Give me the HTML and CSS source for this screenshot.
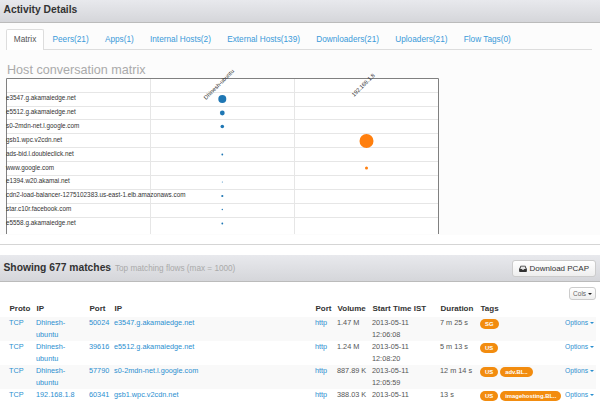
FILE: index.html
```html
<!DOCTYPE html>
<html lang="en">
<head>
    <meta charset="UTF-8">
    <title>Activity Details</title>
    <link rel="stylesheet" href="styles.css">
</head>
<body>
    <div class="bar bar-top">
        <h2>Activity Details</h2>
    </div>
    <div class="panel">
        <ul class="tabs">
            <li class="active">Matrix</li>
            <li>Peers(21)</li>
            <li>Apps(1)</li>
            <li>Internal Hosts(2)</li>
            <li>External Hosts(139)</li>
            <li>Downloaders(21)</li>
            <li>Uploaders(21)</li>
            <li>Flow Tags(0)</li>
        </ul>
        <h3 class="matrix-title">Host conversation matrix</h3>
        <svg class="matrix" width="433" height="156" viewBox="0 0 433 156">
            <rect x="0" y="0" width="433" height="156" fill="#fff"/>
            <g stroke="#e6e6e6" stroke-width="1">
                <path d="M0 14.500H432M0 28.500H432M0 41.500H432M0 55.500H432M0 69.500H432M0 83.500H432M0 97.500H432M0 111.500H432M0 125.500H432M0 139.500H432"/>
                <path d="M144.500 0V156M288.500 0V156"/>
            </g>
            <path d="M0.500 156V0.500H432.500V156" fill="none" stroke="#808080"/>
            <g class="row-labels">
                <text x="0" y="21.500">e3547.g.akamaiedge.net</text>
                <text x="0" y="35.500">e5512.g.akamaiedge.net</text>
                <text x="0" y="49.500">s0-2mdn-net.l.google.com</text>
                <text x="0" y="63.500">gsb1.wpc.v2cdn.net</text>
                <text x="0" y="77.500">ads-bid.l.doubleclick.net</text>
                <text x="0" y="91.500">www.google.com</text>
                <text x="0" y="105">e1394.w20.akamai.net</text>
                <text x="0" y="119">cdn2-load-balancer-1275102383.us-east-1.elb.amazonaws.com</text>
                <text x="0" y="133">star.c10r.facebook.com</text>
                <text x="0" y="147">e5558.g.akamaiedge.net</text>
            </g>
            <g class="col-labels">
                <text transform="translate(200 22) rotate(-45)">Dhinesh-ubuntu</text>
                <text transform="translate(348 19) rotate(-45)">192.168.1.8</text>
            </g>
            <g fill="#1f77b4">
                <circle cx="216.300" cy="21" r="4"/>
                <circle cx="216.300" cy="35" r="2.400"/>
                <circle cx="216.300" cy="48.500" r="1.800"/>
                <circle cx="216.300" cy="76.500" r="0.900"/>
                <circle cx="216.300" cy="104" r="0.500"/>
                <circle cx="216.300" cy="118" r="1.100"/>
                <circle cx="216.300" cy="131.500" r="0.700"/>
                <circle cx="216.300" cy="145.500" r="0.900"/>
            </g>
            <g fill="#ff7f0e">
                <circle cx="360.500" cy="63" r="7"/>
                <circle cx="360.500" cy="90" r="1.500"/>
            </g>
        </svg>
    </div>
    <div class="spacer"></div>
    <div class="bar bar-results">
        <h2>Showing 677 matches <small>Top matching flows (max = 1000)</small></h2>
        <button class="btn btn-download">
            <svg width="8" height="7" viewBox="0 0 10 9"><path d="M2 1h6l2 4v3a1 1 0 0 1-1 1H1a1 1 0 0 1-1-1V5z" fill="#333"/><path d="M2.600 2h4.800l1.200 3H6.500l-.6 1H4.100l-.6-1H1.400z" fill="#e6e6e6"/></svg>
            Download PCAP
        </button>
    </div>
    <div class="results">
        <div class="tools"><button class="btn btn-cols">Cols <span class="caret"></span></button></div>
        <table class="flows">
            <thead>
                <tr>
                    <th class="c-proto">Proto</th>
                    <th class="c-ip">IP</th>
                    <th class="c-port">Port</th>
                    <th class="c-host">IP</th>
                    <th class="c-sport">Port</th>
                    <th class="c-vol">Volume</th>
                    <th class="c-time">Start Time IST</th>
                    <th class="c-dur">Duration</th>
                    <th class="c-tags">Tags</th>
                    <th class="c-opt"></th>
                </tr>
            </thead>
            <tbody>
                <tr>
                    <td><a>TCP</a></td><td><a>Dhinesh-ubuntu</a></td><td><a>50024</a></td><td><a>e3547.g.akamaiedge.net</a></td><td><a>http</a></td>
                    <td class="nowrap">1.47 M</td><td>2013-05-11 12:06:08</td><td class="nowrap">7 m 25 s</td>
                    <td class="nowrap"><span class="tag">SG</span></td><td class="opt"><a>Options <span class="caret"></span></a></td>
                </tr>
                <tr>
                    <td><a>TCP</a></td><td><a>Dhinesh-ubuntu</a></td><td><a>39616</a></td><td><a>e5512.g.akamaiedge.net</a></td><td><a>http</a></td>
                    <td class="nowrap">1.24 M</td><td>2013-05-11 12:08:20</td><td class="nowrap">5 m 13 s</td>
                    <td class="nowrap"><span class="tag">US</span></td><td class="opt"><a>Options <span class="caret"></span></a></td>
                </tr>
                <tr>
                    <td><a>TCP</a></td><td><a>Dhinesh-ubuntu</a></td><td><a>57790</a></td><td><a>s0-2mdn-net.l.google.com</a></td><td><a>http</a></td>
                    <td class="nowrap">887.89 K</td><td>2013-05-11 12:05:59</td><td class="nowrap">12 m 14 s</td>
                    <td class="nowrap"><span class="tag">US</span> <span class="tag">adv.BL..</span></td><td class="opt"><a>Options <span class="caret"></span></a></td>
                </tr>
                <tr>
                    <td><a>TCP</a></td><td><a>192.168.1.8</a></td><td><a>60341</a></td><td><a>gsb1.wpc.v2cdn.net</a></td><td><a>http</a></td>
                    <td class="nowrap">388.03 K</td><td>2013-05-11</td><td class="nowrap">13 s</td>
                    <td class="nowrap"><span class="tag">US</span> <span class="tag">imagehosting.BL..</span></td><td class="opt"><a>Options <span class="caret"></span></a></td>
                </tr>
            </tbody>
        </table>
    </div>
</body>
</html>
```

FILE: styles.css
```css
html, body {
    height: 404px;
    overflow: hidden;
}
body {
    font-family: "Liberation Sans", Arial, sans-serif;
    font-size: 7.300px;
    line-height: 12px;
    color: #555;
    background-color: #fff;
    margin: 0;
}
h2 {
    margin: 0;
    font-size: 10.300px;
    font-weight: bold;
    color: #333;
    line-height: 18px;
}
h2 small {
    font-size: 8.200px;
    font-weight: normal;
    color: #aaa;
    margin-left: 1px;
}
.bar {
    display: flex;
    justify-content: space-between;
    align-items: center;
    box-sizing: border-box;
    padding: 0 4px 0 3.500px;
    background: linear-gradient(#e8e9ed, #d5d6da);
    border-bottom: 1px solid #bbb;
}
.bar-top {
    height: 23px;
    padding-bottom: 3px;
}
.bar-results {
    height: 27px;
    margin-top: 10px;
}
.panel {
    background-color: #fcfcfc;
    padding: 6px 6px 0;
    height: 212px;
    box-sizing: border-box;
}
.spacer {
    border-top: 1px solid #d5d5d5;
    margin-top: 9px;
}
.tabs {
    display: flex;
    list-style: none;
    margin: 0 2px 0 0;
    padding: 0;
    height: 21px;
    box-sizing: border-box;
    border-bottom: 1px solid #ddd;
    font-size: 8.250px;
}
.tabs li {
    padding: 0 7.800px;
    margin-right: 0.600px;
    line-height: 21px;
    color: #3a9ad9;
    white-space: nowrap;
}
.tabs .active {
    color: #555;
    background-color: #fff;
    height: 21px;
    border: 1px solid #ddd;
    border-bottom: none;
    border-radius: 2px 2px 0 0;
    padding: 0 6.800px;
    line-height: 20px;
    box-sizing: border-box;
}
.matrix-title {
    margin: 12px 1px 0;
    font-size: 12.600px;
    font-weight: normal;
    line-height: 16px;
    color: #aaa;
}
.matrix {
    display: block;
    overflow: visible;
}
.row-labels text {
    font-size: 6.350px;
    fill: #333;
}
.col-labels text {
    font-size: 5.700px;
    fill: #333;
}
.btn {
    font-family: inherit;
    color: #333;
    background: linear-gradient(#fff, #eee);
    border: 1px solid #ccc;
    border-radius: 3px;
    cursor: pointer;
}
.btn-download {
    display: flex;
    align-items: center;
    justify-content: center;
    gap: 2.500px;
    height: 17px;
    width: 84px;
    padding: 0;
    font-size: 8px;
    white-space: nowrap;
}
.btn-cols {
    height: 13px;
    width: 27px;
    padding: 0;
    font-size: 6.500px;
    line-height: 11px;
    color: #666;
}
.caret {
    display: inline-block;
    width: 0;
    height: 0;
    vertical-align: middle;
    border-left: 2px solid transparent;
    border-right: 2px solid transparent;
    border-top: 2px solid currentColor;
}
.btn-cols .caret {
    color: #222;
}
.results {
    padding: 5px 4px 0;
}
.tools {
    display: flex;
    justify-content: flex-end;
    height: 14px;
}
.flows {
    width: 596px;
    margin-left: -4px;
    border-collapse: collapse;
    table-layout: fixed;
}
.flows th {
    height: 16px;
    padding: 0 0 2px 9.500px;
    box-sizing: border-box;
    text-align: left;
    font-weight: bold;
    font-size: 8px;
    color: #333;
    vertical-align: bottom;
    white-space: nowrap;
}
.flows td {
    height: 24px;
    padding: 0 0 0 9px;
    box-sizing: border-box;
    vertical-align: top;
}
.flows tbody tr:nth-child(odd) {
    background-color: #f9f9f9;
}
.flows a {
    color: #2b8fd0;
}
.c-proto { width: 27px; }
.c-ip { width: 53px; }
.c-port { width: 25px; }
.c-host { width: 201px; }
.c-sport { width: 22px; }
.c-vol { width: 35px; }
.c-time { width: 68px; }
.c-dur { width: 40px; }
.c-tags { width: 85px; }
.nowrap {
    white-space: nowrap;
}
.tag {
    display: inline-block;
    height: 10px;
    line-height: 10px;
    padding: 0 5px;
    margin-top: 2px;
    border-radius: 5px;
    background-color: #f28c0f;
    color: #fff;
    font-size: 5.900px;
    font-weight: bold;
    white-space: nowrap;
}
.opt {
    white-space: nowrap;
    font-size: 6.700px;
}
```
